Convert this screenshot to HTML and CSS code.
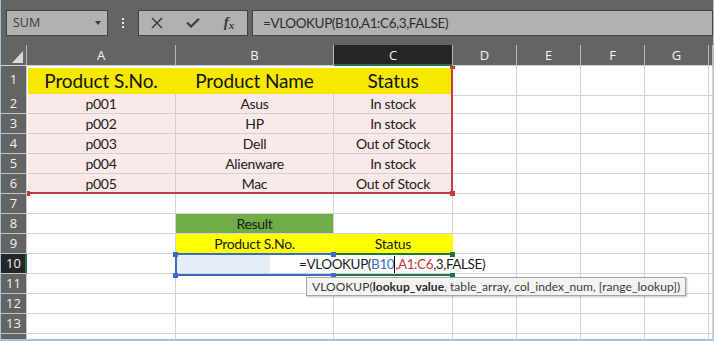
FILE: index.html
```html
<!DOCTYPE html>
<html lang="en">
<head>
<meta charset="utf-8">
<title>VLOOKUP</title>
<link rel="stylesheet" href="styles.css">
</head>
<body>
<div class="app">
  <div class="toolbar">
    <div class="namebox"><span>SUM</span><span class="caret"></span></div>
    <div class="grip"><i></i><i></i><i></i></div>
    <div class="fxbox">
      <span class="btn"><svg width="12" height="12" viewBox="0 0 12 12"><path d="M1 1L11 11M11 1L1 11" stroke="#3e3e3e" stroke-width="1.6" fill="none"/></svg></span>
      <span class="btn"><svg width="14" height="10" viewBox="0 0 14 10"><path d="M1 4.5L5 8.5L13 0.8" stroke="#3e3e3e" stroke-width="2.2" fill="none"/></svg></span>
      <span class="btn fx"><span class="f">f</span><span class="x">x</span></span>
    </div>
    <div class="formula">=VLOOKUP(B10,A1:C6,3,FALSE)</div>
  </div>
  <div class="sheet">
    <div class="row hdr">
      <div class="corner"></div><div>A</div><div>B</div><div class="sel">C</div><div>D</div><div>E</div><div>F</div><div>G</div><div></div>
    </div>
    <div class="row r1">
      <div class="rh">1</div><div class="y1">Product S.No.</div><div class="y1">Product Name</div><div class="y1">Status</div><div></div><div></div><div></div><div></div><div></div>
    </div>
    <div class="row">
      <div class="rh">2</div><div class="pk">p001</div><div class="pk">Asus</div><div class="pk">In stock</div><div></div><div></div><div></div><div></div><div></div>
    </div>
    <div class="row">
      <div class="rh">3</div><div class="pk">p002</div><div class="pk">HP</div><div class="pk">In stock</div><div></div><div></div><div></div><div></div><div></div>
    </div>
    <div class="row">
      <div class="rh">4</div><div class="pk">p003</div><div class="pk">Dell</div><div class="pk">Out of Stock</div><div></div><div></div><div></div><div></div><div></div>
    </div>
    <div class="row">
      <div class="rh">5</div><div class="pk">p004</div><div class="pk">Alienware</div><div class="pk">In stock</div><div></div><div></div><div></div><div></div><div></div>
    </div>
    <div class="row">
      <div class="rh">6</div><div class="pk">p005</div><div class="pk">Mac</div><div class="pk">Out of Stock</div><div></div><div></div><div></div><div></div><div></div>
    </div>
    <div class="row">
      <div class="rh">7</div><div></div><div></div><div></div><div></div><div></div><div></div><div></div><div></div>
    </div>
    <div class="row">
      <div class="rh">8</div><div></div><div class="gr">Result</div><div></div><div></div><div></div><div></div><div></div><div></div>
    </div>
    <div class="row">
      <div class="rh">9</div><div></div><div class="yl">Product S.No.</div><div class="yl">Status</div><div></div><div></div><div></div><div></div><div></div>
    </div>
    <div class="row">
      <div class="rh sel">10</div><div></div><div class="lb"></div><div></div><div></div><div></div><div></div><div></div><div></div>
    </div>
    <div class="row">
      <div class="rh">11</div><div></div><div></div><div></div><div></div><div></div><div></div><div></div><div></div>
    </div>
    <div class="row">
      <div class="rh">12</div><div></div><div></div><div></div><div></div><div></div><div></div><div></div><div></div>
    </div>
    <div class="row">
      <div class="rh">13</div><div></div><div></div><div></div><div></div><div></div><div></div><div></div><div></div>
    </div>
    <div class="row">
      <div class="rh"></div><div></div><div></div><div></div><div></div><div></div><div></div><div></div><div></div>
    </div>

    <div class="range-red"></div>
    <i class="hd red" style="left:449px;top:21px;width:5px;height:3px"></i>
    <i class="hd red" style="left:26px;top:146px;width:3px;height:5px"></i>
    <i class="hd red" style="left:449px;top:146px;width:5px;height:5px"></i>

    <div class="range-blue"></div>
    <div class="range-green"></div>
    <div class="edit">=VLOOKUP(<span class="ref-b">B10</span><span class="caret-line"></span><span class="ref-r">,A1:C6</span>,3,FALSE)</div>
    <i class="hd blue" style="left:172px;top:207px"></i>
    <i class="hd blue" style="left:330px;top:207px"></i>
    <i class="hd blue" style="left:172px;top:228px"></i>
    <i class="hd blue" style="left:330px;top:228px"></i>
    <i class="hd green" style="left:449px;top:207px"></i>
    <i class="hd green" style="left:449px;top:228px"></i>

    <div class="tip">VLOOKUP(<b>lookup_value</b>, table_array, col_index_num, [range_lookup])</div>
  </div>
</div>
</body>
</html>
```
FILE: styles.css
```css
* { box-sizing: border-box; }
html, body { margin: 0; padding: 0; background: #fff; }

.app {
  width: 714px;
  height: 341px;
  border-left: 1px solid #a9bfd3;
  border-right: 1px solid #a9bfd3;
  border-bottom: 2px solid #a9bfd3;
  overflow: hidden;
  background: #fff;
  display: flex;
  flex-direction: column;
  font-family: Lato, "Noto Sans", sans-serif;
}

/* ---------- formula bar ---------- */
.toolbar {
  height: 45px;
  flex: none;
  background: #646464;
  display: flex;
  align-items: center;
  padding-left: 5px;
}
.namebox {
  width: 102px;
  height: 26px;
  background: #b1b1b1;
  border: 1px solid #434343;
  display: flex;
  align-items: center;
  justify-content: space-between;
  padding: 0 6px;
  font: 12.5px "Open Sans", sans-serif;
  color: #3a3a3a;
}
.caret {
  width: 0;
  height: 0;
  border-left: 3.5px solid transparent;
  border-right: 3.5px solid transparent;
  border-top: 4px solid #3c3c3c;
}
.grip {
  width: 30px;
  display: flex;
  flex-direction: column;
  align-items: center;
  gap: 2px;
}
.grip i { width: 2px; height: 2px; background: #e8e8e8; }
.fxbox {
  width: 110px;
  height: 26px;
  margin-right: 4px;
  background: #b1b1b1;
  border: 1px solid #434343;
  display: flex;
}
.btn {
  flex: 1;
  display: flex;
  align-items: center;
  justify-content: center;
}
.fx { font-family: "Liberation Serif", serif; font-style: italic; color: #3a3a3a; font-weight: bold; }
.fx .f { font-size: 15px; }
.fx .x { font-size: 11px; margin-top: 4px; }
.formula {
  flex: 1;
  height: 26px;
  background: #b1b1b1;
  border: 1px solid #434343;
  padding-left: 10px;
  font-size: 13.5px;
  letter-spacing: -0.4px;
  line-height: 24px;
  color: #2e2e2e;
  white-space: nowrap;
}

/* ---------- sheet ---------- */
.sheet { position: relative; flex: 1; overflow: hidden; }
.row {
  display: grid;
  grid-template-columns: 26px 149px 158px 119px 64px 64px 64px 64px 1fr;
  height: 20px;
}
.row > div {
  border-right: 1px solid #d4d4d4;
  border-bottom: 1px solid #d4d4d4;
  font-size: 14px;
  letter-spacing: -0.3px;
  line-height: 19px;
  color: #222;
  text-align: center;
  white-space: nowrap;
}
.row.hdr { height: 21px; background: #646464; }
.row.hdr > div {
  border-right-color: #b8b8b8;
  border-bottom-color: #cfcfcf;
  color: #f2f2f2;
  font: 13px "Open Sans", sans-serif;
  letter-spacing: 0;
  line-height: 20px;
}
.row.hdr > .sel {
  background: #262626;
  border-bottom-color: #217346;
  box-shadow: inset 0 -1px #217346;
}
.row.hdr > .corner { position: relative; }
.corner::after {
  content: "";
  position: absolute;
  right: 3px;
  bottom: 2px;
  width: 11px;
  height: 12px;
  background: #d8d8d8;
  clip-path: polygon(100% 0, 100% 100%, 0 100%);
}
.row > .rh {
  background: #646464;
  color: #f2f2f2;
  font: 13px "Open Sans", sans-serif;
  letter-spacing: 0;
  line-height: 19px;
  border-right-color: #c8c8c8;
  border-bottom-color: #c4c4c4;
}
.row > .rh.sel {
  background: #262626;
  border-right-color: #217346;
  box-shadow: inset -1px 0 #217346;
}
.row.r1 { height: 28px; }
.row.r1 > div { font-size: 19px; letter-spacing: -0.1px; line-height: 29px; color: #141414; }
.row.r1 > .rh { font-size: 13px; letter-spacing: 0; line-height: 27px; color: #f2f2f2; }
.row > .y1 { background: #f7e800; border-right-color: #f7e800; border-bottom-color: #e0d6c8; }
.row > .pk { background: #f9e9e9; border-color: #d7cdcd; }
.row > .gr { background: #70ad47; color: #1a1a1a; }
.row > .yl { background: #ffff00; border-right-color: #ffff00; color: #1a1a1a; }
.row > .lb { background: #e6edf8; }

/* ---------- overlays ---------- */
.range-red {
  position: absolute;
  left: 26px;
  top: 21px;
  width: 426px;
  height: 128px;
  border-left: 1px solid #fff;
  border-top: 2px solid #fff;
  border-right: 2px solid #c43b42;
  border-bottom: 2px solid #c43b42;
}
.hd { position: absolute; width: 5px; height: 5px; }
.hd.red { background: #c43b42; }
.hd.blue { background: #3a6cc6; }
.hd.green { background: #217346; }
.range-blue {
  position: absolute;
  left: 174px;
  top: 208px;
  width: 159px;
  height: 23px;
  border: 2px solid #3a6cc6;
}
.range-green {
  position: absolute;
  left: 334px;
  top: 208px;
  width: 120px;
  height: 23px;
  border-top: 2px solid #217346;
  border-bottom: 2px solid #217346;
}
.edit {
  position: absolute;
  left: 269px;
  top: 210px;
  width: 232px;
  height: 18px;
  background: #fff;
  padding-left: 29px;
  font-size: 13.5px;
  letter-spacing: -0.4px;
  line-height: 18px;
  color: #1a1a1a;
  white-space: nowrap;
}
.ref-b { color: #3a6cc6; }
.ref-r { color: #c8373d; }
.caret-line {
  display: inline-block;
  width: 1px;
  height: 17px;
  background: #000;
  vertical-align: -4px;
}
.tip {
  position: absolute;
  left: 305px;
  top: 232px;
  width: 380px;
  height: 19px;
  background: #f3f3f3;
  border: 1px solid #a5a5a5;
  box-shadow: 1px 1px 2px rgba(0, 0, 0, .25);
  font-size: 12px;
  letter-spacing: 0.05px;
  line-height: 17px;
  color: #3b3b3b;
  padding-left: 5px;
  white-space: nowrap;
}
.tip b { font-weight: bold; color: #2a2a2a; }
```
